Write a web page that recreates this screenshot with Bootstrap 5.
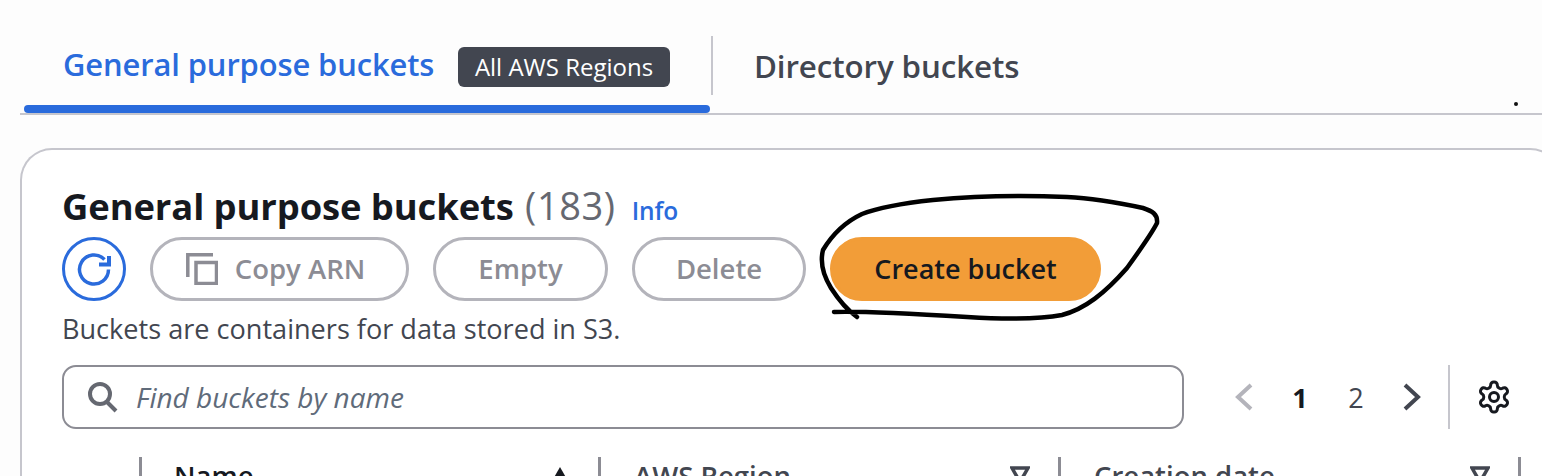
<!DOCTYPE html>
<html lang="en">
  <head>
    <meta charset="UTF-8" />
    <meta name="viewport" content="width=device-width, initial-scale=1.0" />
    <title>S3 buckets</title>
    <link href="https://cdn.jsdelivr.net/npm/bootstrap@5.3.0/dist/css/bootstrap.min.css" rel="stylesheet" />
    <style>
      html, body { height: 476px; overflow: hidden; }
      body { background: #fdfdfd; font-family: "Open Sans", "Noto Sans", sans-serif; color: #16191f; position: relative; }
      .tabs-bar { height: 115px; margin-left: 20px; border-bottom: 2px solid #c6c6cd; }
      .tab-active { width: 686px; height: 113px; margin-left: 4px; padding: 16px 40px 0 39px; position: relative; flex-shrink: 0; }
      .tab-active::after { content: ""; position: absolute; left: 0; right: 0; bottom: 0; height: 8px; background: #2a6bdc; border-radius: 4px; }
      .tab-title { font-size: 30.900px; font-weight: 600; color: #2a6bdc; white-space: nowrap; line-height: 1; letter-spacing: -.1px; }
      .tab-title-muted { font-size: 31.300px; color: #424650; }
      .tab-badge { height: 40px; width: 212px; background: #424650; color: #fff; border-radius: 6px; font-size: 24px; margin-top: 4px; }
      .tab-divider { width: 2px; height: 59px; background: #c6c6cd; margin: 36px 0 0 1px; }
      .tab-plain { height: 113px; margin-left: 41px; padding-top: 20px; }
      .stray-dot { position: absolute; left: 1514px; top: 102px; width: 4px; height: 4px; border-radius: 50%; background: #111; }
      .bucket-panel { margin: 33px -20px 0 20px; height: 340px; background: #fff; border: 2px solid #c6c6cd; border-bottom: 0; border-radius: 32px 32px 0 0; padding: 32px 0 0 40px; }
      .panel-title { font-size: 36.400px; font-weight: 700; line-height: 46px; margin: 0; white-space: nowrap; letter-spacing: -.1px; }
      .panel-count { font-size: 38px; font-weight: 400; color: #656871; letter-spacing: .6px; margin-left: 2px; }
      .info-link { font-size: 24.500px; font-weight: 600; color: #2a6bdc; text-decoration: none; margin-left: 16px; }
      .tool-row { height: 64px; margin-top: 3px; gap: 24px; }
      .round-icon { width: 64px; height: 64px; border: 3px solid #2a6bdc; border-radius: 50%; background: #fff; padding: 0; }
      .pill { height: 64px; border-radius: 32px; border: 3px solid #b4b4bb; background: #fff; color: #8c8c94; font-size: 27.500px; font-weight: 600; padding: 0; }
      .pill-copy { width: 259px; gap: 17px; padding-right: 8px; }
      .pill-empty { width: 175px; }
      .pill-delete { width: 174px; }
      .pill-create { width: 271px; border-color: #f29d38; background: #f29d38; color: #16191f; font-size: 27px; }
      .panel-desc { font-size: 27.100px; line-height: 32px; margin: 12px 0 0 0; color: #424650; white-space: nowrap; }
      .filter-row { margin-top: 20px; }
      .find-box { width: 1122px; height: 64px; border: 2px solid #8c8c94; border-radius: 14px; padding-left: 22px; gap: 18px; }
      .find-text { font-size: 28px; font-style: italic; color: #5f6b7a; }
      .pager { width: 266px; padding-left: 32px; }
      .pager-cell { width: 56px; text-align: center; line-height: 1; }
      .pager-num { font-size: 27px; color: #424650; }
      .pager-cur { font-weight: 700; color: #16191f; }
      .pager-divider { width: 2px; height: 64px; background: #c6c6cd; }
      .gear-icon { margin-left: 26px; }
      .head-row { margin: 28px 0 0 77px; height: 40px; }
      .head-cell { border-left: 3px solid #8c8c94; padding: 3px 0 0 33px; font-size: 27.500px; font-weight: 600; line-height: 32px; height: 40px; white-space: nowrap; }
      .head-icon { margin: 5px 28px 0 0; }
      .cell-name { width: 459px; padding-left: 32px; }
      .cell-region { width: 460px; color: #424650; }
      .cell-date { width: 460px; color: #424650; }
      .cell-end { width: 3px; border-left: 3px solid #8c8c94; height: 40px; }
      .scribble { position: absolute; left: 0; top: 0; pointer-events: none; }
    </style>
  </head>
  <body>
    <div class="tabs-bar d-flex align-items-start">
      <div class="tab-active d-flex align-items-center justify-content-between">
        <span class="tab-title">General purpose buckets</span>
        <span class="tab-badge d-flex align-items-center justify-content-center">All AWS Regions</span>
      </div>
      <div class="tab-divider flex-shrink-0"></div>
      <div class="tab-plain d-flex align-items-center">
        <span class="tab-title tab-title-muted">Directory buckets</span>
      </div>
    </div>
    <div class="stray-dot"></div>

    <div class="bucket-panel">
      <h2 class="panel-title">General purpose buckets <span class="panel-count">(183)</span><a class="info-link" href="#">Info</a></h2>

      <div class="tool-row d-flex align-items-center">
        <button class="round-icon d-flex align-items-center justify-content-center flex-shrink-0" type="button" aria-label="Refresh">
          <svg width="36" height="36" viewBox="0 0 36 36" fill="none" stroke="#2a6bdc" stroke-width="3.500">
            <path d="M28.500 8.500A14.500 14.500 0 1 0 32.500 18.500" />
            <path d="M33 5v8.500H23" stroke-width="4" />
          </svg>
        </button>
        <button class="pill pill-copy d-flex align-items-center justify-content-center" type="button">
          <svg width="32" height="32" viewBox="0 0 32 32" fill="none" stroke="#8c8c94" stroke-width="3.500">
            <path d="M1.800 24V1.800H27" />
            <rect x="10" y="9.500" width="20.500" height="21" />
          </svg>
          Copy ARN
        </button>
        <button class="pill pill-empty" type="button">Empty</button>
        <button class="pill pill-delete" type="button">Delete</button>
        <button class="pill pill-create" type="button">Create bucket</button>
      </div>

      <p class="panel-desc">Buckets are containers for data stored in S3.</p>

      <div class="filter-row d-flex align-items-center">
        <div class="find-box d-flex align-items-center flex-shrink-0">
          <svg width="32" height="32" viewBox="0 0 32 32" fill="none" stroke="#656871" stroke-width="4">
            <circle cx="14" cy="13" r="10" />
            <path d="M21 21l9 9" />
          </svg>
          <span class="find-text">Find buckets by name</span>
        </div>
        <div class="pager d-flex align-items-center flex-shrink-0">
          <span class="pager-cell"><svg width="20" height="28" viewBox="0 0 20 28" fill="none" stroke="#b4b4bb" stroke-width="4"><path d="M17 2L4 14l13 12" /></svg></span>
          <span class="pager-cell pager-num pager-cur">1</span>
          <span class="pager-cell pager-num">2</span>
          <span class="pager-cell"><svg width="20" height="28" viewBox="0 0 20 28" fill="none" stroke="#424650" stroke-width="4"><path d="M3 2l13 12L3 26" /></svg></span>
          <div class="pager-divider ms-auto"></div>
        </div>
        <svg class="gear-icon" width="36" height="36" viewBox="0 0 24 24" fill="none" stroke="#16191f" stroke-width="2" stroke-linejoin="round">
          <path d="M12.220 2h-.44a2 2 0 0 0-2 2v.18a2 2 0 0 1-1 1.730l-.43.25a2 2 0 0 1-2 0l-.15-.08a2 2 0 0 0-2.730.73l-.22.38a2 2 0 0 0 .73 2.730l.15.1a2 2 0 0 1 1 1.720v.51a2 2 0 0 1-1 1.740l-.15.09a2 2 0 0 0-.73 2.730l.22.38a2 2 0 0 0 2.730.73l.15-.08a2 2 0 0 1 2 0l.43.25a2 2 0 0 1 1 1.730V20a2 2 0 0 0 2 2h.44a2 2 0 0 0 2-2v-.18a2 2 0 0 1 1-1.730l.43-.25a2 2 0 0 1 2 0l.15.08a2 2 0 0 0 2.730-.73l.22-.39a2 2 0 0 0-.73-2.730l-.15-.08a2 2 0 0 1-1-1.740v-.5a2 2 0 0 1 1-1.740l.15-.09a2 2 0 0 0 .73-2.730l-.22-.38a2 2 0 0 0-2.730-.73l-.15.08a2 2 0 0 1-2 0l-.43-.25a2 2 0 0 1-1-1.730V4a2 2 0 0 0-2-2z" />
          <circle cx="12" cy="12" r="3" />
        </svg>
      </div>

      <div class="head-row d-flex">
        <div class="head-cell cell-name d-flex justify-content-between">
          <span>Name</span>
          <svg class="head-icon" width="20" height="20" viewBox="0 0 20 20" fill="#16191f"><path d="M10 2l8 14H2z" /></svg>
        </div>
        <div class="head-cell cell-region d-flex justify-content-between">
          <span>AWS Region</span>
          <svg class="head-icon" width="20" height="20" viewBox="0 0 20 20" fill="none" stroke="#424650" stroke-width="3.500"><path d="M2 3h16L10 17z" /></svg>
        </div>
        <div class="head-cell cell-date d-flex justify-content-between">
          <span>Creation date</span>
          <svg class="head-icon" width="20" height="20" viewBox="0 0 20 20" fill="none" stroke="#424650" stroke-width="3.500"><path d="M2 3h16L10 17z" /></svg>
        </div>
        <div class="cell-end"></div>
      </div>
    </div>

    <svg class="scribble" width="1542" height="476" viewBox="0 0 1542 476" fill="none" stroke="#000" stroke-width="4.500" stroke-linecap="round" stroke-linejoin="round">
      <path d="M834 312C860 311 900 313 967 317C1000 319 1035 320 1062 315C1085 309 1105 293 1127 268C1140 250 1152 233 1157 223C1158 214 1152 211 1143 208C1120 203 1090 198 1067 197C1020 195 975 196 933 200C905 203 880 207 862 214C845 222 832 235 823 250C820 262 823 275 831 288C840 302 850 312 857 317" />
    </svg>
  </body>
</html>
